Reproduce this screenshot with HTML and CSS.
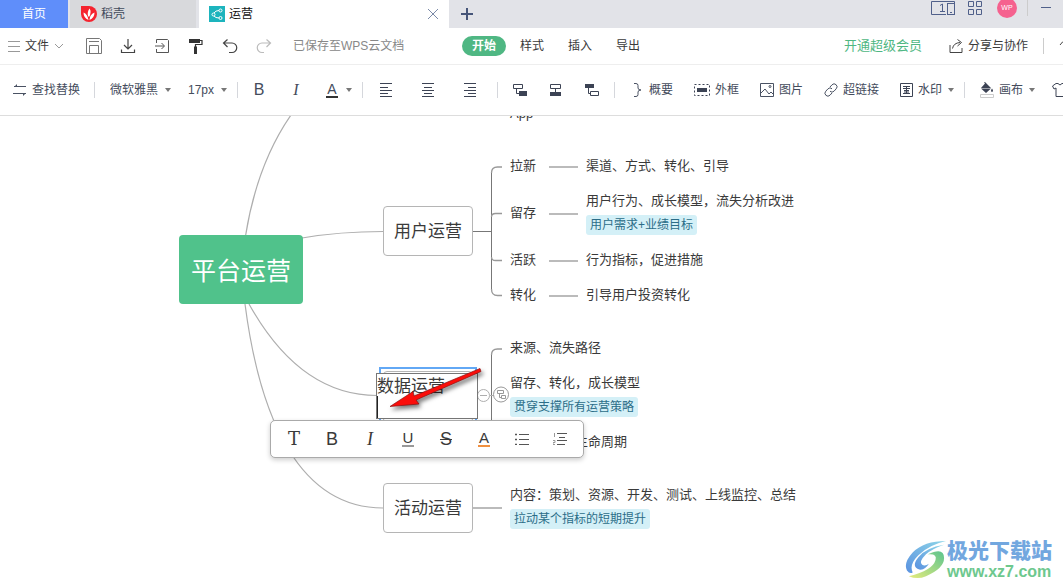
FILE: index.html
```html
<!DOCTYPE html>
<html lang="zh-CN">
<head>
<meta charset="utf-8">
<title>运营</title>
<link rel="stylesheet" href="styles.css">
</head>
<body>
<header class="tabs">
  <button class="tab tab-home">首页</button>
  <button class="tab tab-docer">
    <svg width="16" height="16" viewBox="0 0 16 16"><path d="M0 0h8a8 8 0 1 1-8 8z" fill="#f5242f"/><path d="M7.500 14Q2.500 12 2.500 6.500Q6.500 8 7.500 14M7 10Q6 6 8.500 2.500Q11 6 8 11M8.500 14Q8.500 8.500 13.500 6.500Q13.500 12 8.500 14" fill="#fff"/></svg>
    稻壳
  </button>
  <div class="tab tab-active">
    <svg width="16" height="16" viewBox="0 0 16 16"><rect width="16" height="16" fill="#1db4bd"/><g fill="none" stroke="#fff"><circle cx="4.500" cy="8.500" r="1.500"/><circle cx="11.500" cy="4.500" r="1.500"/><circle cx="11.500" cy="12" r="1.500"/><path d="M5 7Q6.500 4.500 10 4.500M5 10Q6.500 12 10 12"/></g></svg>
    <span>运营</span>
    <button class="close" aria-label="关闭"><svg width="12" height="12" viewBox="0 0 12 12"><path d="M1 1l10 10M11 1L1 11" stroke="#7b8aa8" fill="none"/></svg></button>
  </div>
  <button class="new-tab" aria-label="新建"><svg width="12" height="12" viewBox="0 0 12 12"><path d="M6 0v12M0 6h12" stroke="#465579" stroke-width="2"/></svg></button>
  <div class="window-tools">
    <button aria-label="设备"><svg width="24" height="16" viewBox="0 0 24 16" fill="none" stroke="#50608a"><path d="M15 14.500H.5V1.500h23v13M11.500 4v7M9 5.500l2.500-1.500M9 11.500h5" /><rect x="16.500" y="3.500" width="7" height="11"/><path d="M19 12.500h2"/></svg></button>
    <button aria-label="应用"><svg width="14" height="16" viewBox="0 0 14 16" fill="none" stroke="#50608a"><path d="M.5 1.500h5v5h-5zM8.500 1.500h5v5h-5zM.5 9.500h5v5h-5zM8.500 9.500h5v5h-5z"/></svg></button>
    <span class="avatar">WP</span>
    <span class="bar"></span>
    <button aria-label="最小化"><svg width="10" height="16" viewBox="0 0 10 16"><path d="M0 7.500h10" stroke="#50608a"/></svg></button>
  </div>
</header>

<nav class="menu">
  <button class="file"><svg width="12" height="12" viewBox="0 0 12 12" stroke="#999"><path d="M0 1.500h12M0 6.500h12M0 11.500h12"/></svg>文件<svg width="10" height="12" viewBox="0 0 10 12"><path d="M1 4l4 4 4-4" fill="none" stroke="#999"/></svg></button>
  <div class="quick">
    <button aria-label="保存"><svg width="16" height="16" viewBox="0 0 16 16" fill="none" stroke="#777"><path d="M.5.500h13l2 2v13H.5zM3.500 15V7.500h9V15M3 3.500h10"/></svg></button>
    <button aria-label="下载"><svg width="16" height="16" viewBox="0 0 16 16" fill="none" stroke="#444" stroke-width="1.200"><path d="M8 1v9.500M4 7l4 4 4-4M1.500 11.500v3h13v-3"/></svg></button>
    <button aria-label="导入"><svg width="16" height="16" viewBox="0 0 16 16" fill="none" stroke="#555"><path d="M2.500 5V1.500h11l1 1v12h-12V11M1 8h9M7.500 5L10.500 8l-3 3"/></svg></button>
    <button aria-label="格式刷"><svg width="16" height="16" viewBox="0 0 16 16"><path d="M1 1h11v4H1z" fill="#333"/><path d="M12 2.500h2v4H7.500V9" fill="none" stroke="#333" stroke-width="1.200"/><path d="M6 8.500h3V16H6z" fill="#333"/></svg></button>
    <button aria-label="撤销"><svg width="16" height="16" viewBox="0 0 16 16" fill="none" stroke="#444" stroke-width="1.200"><path d="M5.500 1.500L1.500 5l4 4M2 5h8a4.500 4.500 0 0 1 0 9.500H7"/></svg></button>
    <button aria-label="重做"><svg width="16" height="16" viewBox="0 0 16 16" fill="none" stroke="#bbb" stroke-width="1.200"><path d="M10.500 1.500l4 3.500-4 4M14 5H6a4.500 4.500 0 0 0 0 9.500h2"/></svg></button>
  </div>
  <span class="saved">已保存至WPS云文档</span>
  <div class="pages">
    <button class="page page-on">开始</button>
    <button class="page">样式</button>
    <button class="page">插入</button>
    <button class="page">导出</button>
  </div>
  <div class="menu-end">
    <a class="vip" href="#">开通超级会员</a>
    <button class="share"><svg width="14" height="14" viewBox="0 0 14 14" fill="none" stroke="#444"><path d="M1 6v7.500h12V9M3.500 9.500Q4.500 4 11 3.500M8.500.5l4 3-4 3.500"/></svg>分享与协作</button>
    <span class="bar"></span>
    <svg class="cut" width="14" height="14" viewBox="0 0 14 14"><path d="M1 6q2-4 6-4t6 4" fill="none" stroke="#444"/></svg>
  </div>
</nav>

<div class="ribbon">
  <button class="cmd"><svg width="14" height="14" viewBox="0 0 14 14" fill="none" stroke="#4a5263"><path d="M1 3.500h12M0 10.500h13"/><path d="M1 4l3-3v3zM13 10l-3 3v-3z" fill="#4a5263" stroke="none"/></svg>查找替换</button>
  <div class="group fonts">
    <label class="pick"><select class="family" aria-label="字体"><option>微软雅黑</option></select><i class="caret"></i></label>
    <label class="pick"><select class="size" aria-label="字号"><option>17px</option></select><i class="caret"></i></label>
  </div>
  <div class="group letters">
    <button class="letter">B</button>
    <button class="letter slant">I</button>
    <button class="letter tint"><span>A</span><i class="caret"></i></button>
  </div>
  <div class="group aligns">
    <button aria-label="左对齐"><svg width="14" height="14" viewBox="0 0 14 14" stroke="#3c4354"><path d="M1 .5h12M1 4.500h8M1 7.500h12M1 10.500h8M1 13.500h12"/></svg></button>
    <button aria-label="居中"><svg width="14" height="14" viewBox="0 0 14 14" stroke="#3c4354"><path d="M1 .5h12M3 4.500h8M1 7.500h12M3 10.500h8M1 13.500h12"/></svg></button>
    <button aria-label="右对齐"><svg width="14" height="14" viewBox="0 0 14 14" stroke="#3c4354"><path d="M1 .5h12M5 4.500h8M1 7.500h12M5 10.500h8M1 13.500h12"/></svg></button>
  </div>
  <div class="group topics">
    <button aria-label="子主题"><svg width="14" height="12" viewBox="0 0 14 12" fill="none" stroke="#3c4354"><path d="M.5.500h9v4h-9zM3.500 5v4.500H6"/><path d="M6 7h8v5H6z" fill="#3c4354" stroke="none"/></svg></button>
    <button aria-label="同级主题"><svg width="14" height="12" viewBox="0 0 14 12" fill="none" stroke="#3c4354"><path d="M1.500.500h10v4h-10zM6.500 5v3"/><path d="M1 8h11v4H1z" fill="#3c4354" stroke="none"/></svg></button>
    <button aria-label="父主题"><svg width="14" height="12" viewBox="0 0 14 12" fill="none" stroke="#3c4354"><path d="M5.500 7.500h8v4h-8zM3.500 4v5.500H6"/><path d="M0 0h9v4H0z" fill="#3c4354" stroke="none"/></svg></button>
  </div>
  <div class="group inserts">
    <button class="cmd"><svg width="11" height="14" viewBox="0 0 11 14" fill="none" stroke="#4a5263"><path d="M1 .5h2q2 0 2 2V5q0 2 3 2-3 0-3 2v2.500q0 2-2 2H1"/></svg>概要</button>
    <button class="cmd"><svg width="16" height="14" viewBox="0 0 16 14"><rect x=".5" y="1.500" width="15" height="11" fill="none" stroke="#3c4354" stroke-dasharray="2 2"/><path d="M3 5h10v4H3z" fill="#3c4354"/></svg>外框</button>
    <button class="cmd"><svg width="14" height="14" viewBox="0 0 14 14" fill="none" stroke="#4a5263"><path d="M.5.500h13v13H.5zM1 10l4-4 4 5 2-2 2 2"/><circle cx="10" cy="3.500" r="1"/></svg>图片</button>
    <button class="cmd"><svg width="14" height="14" viewBox="0 0 14 14" fill="none" stroke="#4a5263"><path d="M6 4l2-2.200a2.800 2.800 0 0 1 4.200 4L10 8.200a2.800 2.800 0 0 1-4 0M8 10l-2 2.200a2.800 2.800 0 0 1-4.200-4L4 5.800a2.800 2.800 0 0 1 4 0"/></svg>超链接</button>
    <button class="cmd"><svg width="13" height="14" viewBox="0 0 13 14" fill="none" stroke="#3c4354"><path d="M.5.500h12v13H.5zM3 3.500h7M3 5.500h7M3 10.500h7M4 7.500h5M6.500 3v7M4 9h5"/></svg>水印<i class="caret"></i></button>
  </div>
  <div class="group paint">
    <button class="cmd"><svg width="14" height="16" viewBox="0 0 14 16"><path d="M1 6.500h10L6 11zM1 6l4-4.500L4 .5l1-.5 6 6" fill="#3c4354"/><path d="M12 6.500q2 2.500 0 3.500-2-1 0-3.500" fill="#3c4354"/><path d="M.5 12.500h13v3H.5z" fill="#fff" stroke="#ccc"/></svg>画布<i class="caret"></i></button>
    <svg class="cut" width="16" height="14" viewBox="0 0 16 14" fill="none" stroke="#3c4354"><path d="M.5 3L4 .5h2q2 3 4 0h2L15.500 3l-1.500 3-2-1v8.500H4V5L2 6z"/></svg>
  </div>
</div>

<main class="canvas">
  <svg class="links" width="1063" height="471" viewBox="0 116 1063 471" fill="none" stroke="#aeaeae">
    <path d="M245.500 236Q257 164 291 115M302 238Q340 231.500 383 231.500M249 304Q300 395.500 377 395.500M245 304C260 420 300 508 383 508" stroke-width="1.200"/>
    <path d="M473 231.500h18.500M491.500 173V290M491.500 355v100" stroke="#777"/>
    <path d="M491.500 173q0-6 6-6h4.500M491.500 217q0-3.500 4-3.500h6.500M491.500 257q0 3.500 4 3.500h6.500M491.500 289q0 6.500 6 6.500h4.500M491.500 355q0-6 6-6h4.500" stroke="#999" stroke-width="1.300"/>
    <path d="M549 167h29M549 214h29M549 261h29M549 296h29M473 508h29" stroke="#bbb" stroke-width="2"/>
    <circle cx="483.500" cy="395.500" r="6" fill="#fff"/><path d="M480 395.500h7M490 395.500h4"/>
    <circle cx="501" cy="394.500" r="7.500" fill="#fff" stroke="#999"/><path d="M497.500 390.500h6v3h-6zM499.500 394v3.500h2M501.500 395.500h4v3h-4z" stroke="#999"/>
  </svg>
  <div class="node root">平台运营</div>
  <div class="node branch users">用户运营</div>
  <div class="node branch events">活动运营</div>
  <div class="selection"><div class="selected-node"></div></div>
  <textarea class="editor" aria-label="主题文字">数据运营</textarea>
  <i class="cursor"></i>

  <div class="leaf l-app">App</div>
  <div class="leaf l-new">拉新</div><div class="leaf l-new-info">渠道、方式、转化、引导</div>
  <div class="leaf l-keep">留存</div>
  <div class="leaf l-keep-info">用户行为、成长模型，流失分析改进<span class="tag">用户需求+业绩目标</span></div>
  <div class="leaf l-active">活跃</div><div class="leaf l-active-info">行为指标，促进措施</div>
  <div class="leaf l-turn">转化</div><div class="leaf l-turn-info">引导用户投资转化</div>
  <div class="leaf l-source">来源、流失路径</div>
  <div class="leaf l-model">留存、转化，成长模型<span class="tag">贯穿支撑所有运营策略</span></div>
  <div class="leaf l-life">生命周期</div>
  <div class="leaf l-content">内容：策划、资源、开发、测试、上线监控、总结<span class="tag">拉动某个指标的短期提升</span></div>

  <div class="format">
    <button class="slab">T</button>
    <button>B</button>
    <button class="slant">I</button>
    <button class="under"><span>U</span></button>
    <button class="strike">S</button>
    <button class="color"><span>A</span></button>
    <button aria-label="项目符号"><svg width="14" height="12" viewBox="0 0 14 12" stroke="#555"><path d="M4 1.500h10M4 6.500h10M4 11.500h10"/><path d="M0 1.500h2M0 6.500h2M0 11.500h2" stroke-width="1.500"/></svg></button>
    <button aria-label="编号"><svg width="14" height="12" viewBox="0 0 14 12" stroke="#555"><path d="M4 .5h10M6 4.500h6M4 7.500h10M4 11.500h8" fill="none"/><path d="M1.500 0v4M0 7.500h2v2H0v2h2" fill="none" stroke="#999"/></svg></button>
  </div>

  <svg class="arrow" width="110" height="56" viewBox="380 360 110 56"><path d="M390 406.500L413 391.500 414 396 480 368.500 481 371.500 416 400 419 404z" fill="#fb0d0a" stroke="#8a1010" stroke-width=".7"/></svg>

  <div class="brand">
    <svg width="42" height="40" viewBox="0 0 44 42">
      <defs>
        <linearGradient id="sky" x1="0" y1="1" x2="1" y2="0"><stop offset="0" stop-color="#5a92e0"/><stop offset="1" stop-color="#8fd6e8"/></linearGradient>
        <linearGradient id="leaf" x1="0" y1="1" x2="1" y2="0"><stop offset="0" stop-color="#e6ec7c"/><stop offset="1" stop-color="#5cc48f"/></linearGradient>
      </defs>
      <path d="M43 1Q20 1 8 13-2 24 2 32q3 4 6 2Q4 26 14 16 25 5 43 1" fill="url(#sky)"/>
      <path d="M41 5Q22 8 14 18q-8 10 1 13 6 1 10-6-4 3-7 1-4-3 4-11 7-6 19-10" fill="url(#sky)"/>
      <path d="M24 15q10-1 8 6Q29 32 4 38q9 4 18 0 19-8 19-19 0-12-17-4" fill="url(#leaf)"/>
    </svg>
    <div class="brand-text"><strong>极光下载站</strong><span>www.xz7.com</span></div>
  </div>
</main>
</body>
</html>
```

FILE: styles.css
```css
* { box-sizing: border-box; }
body {
  margin: 0;
  height: 100vh;
  display: flex;
  flex-direction: column;
  overflow: hidden;
  background: #fff;
  color: #3a3a3a;
  font: 12px/18px "Liberation Sans", "Noto Sans CJK SC", sans-serif;
}
button, select, textarea { font: inherit; color: inherit; border: 0; padding: 0; margin: 0; background: none; }
button { display: flex; align-items: center; justify-content: center; white-space: nowrap; flex: none; }
svg { flex: none; display: block; }
.bar { width: 1px; height: 16px; background: #ccc; flex: none; }

.tabs { display: flex; height: 28px; flex: none; background: #e2e3e8; }
.tab { display: flex; align-items: center; gap: 4px; flex: none; }
.tab-home { width: 68px; background: #5f8efa; color: #fff; }
.tab-docer { width: 126px; margin: 0 3px 0 2px; padding-left: 11px; justify-content: flex-start; background: #d8d9dc; color: #444c5c; }
.tab-active { width: 250px; padding: 0 10px; background: #fff; color: #111; }
.close { margin-left: auto; }
.new-tab { width: 36px; }
.window-tools { margin-left: auto; display: flex; align-items: center; gap: 13px; height: 15px; padding-right: 12px; }
.avatar { width: 20px; height: 20px; border-radius: 50%; background: #f5628f; color: #fff; font-size: 7px; line-height: 20px; text-align: center; margin: 0 -3px 0 2px; flex: none; }

.menu { display: flex; align-items: center; height: 37px; flex: none; padding-left: 8px; border-bottom: 1px solid #eee; white-space: nowrap; }
.file { gap: 5px; }
.quick { display: flex; gap: 18px; margin: 0 21px 0 22px; }
.saved { color: #888; width: 112px; }
.pages { display: flex; gap: 4px; margin-left: 57px; }
.page { width: 44px; height: 20px; border-radius: 10px; }
.page-on { background: #4fb783; color: #fff; font-weight: 700; }
.menu-end { margin-left: auto; display: flex; align-items: center; gap: 15px; }
.vip { color: #4fb783; font-size: 13px; text-decoration: none; margin-right: 12px; }
.share { gap: 5px; }
.cut { margin-right: -10px; }

.ribbon { display: flex; align-items: center; height: 51px; flex: none; padding-left: 13px; border-bottom: 1px solid #ddd; color: #444c5c; overflow: hidden; }
.cmd { gap: 5px; }
.group { display: flex; align-items: center; height: 16px; border-left: 1px solid #d5d7dc; flex: none; }
.fonts { margin-left: 14px; padding: 0 10px 0 15px; gap: 17px; }
.pick { display: flex; align-items: center; gap: 6px; }
.pick select { appearance: none; height: 18px; }
.family { width: 49px; }
.size { width: 27px; }
.caret { border: 3px solid transparent; border-top: 4px solid #777; border-bottom: 0; flex: none; }
.cmd .caret { margin-left: 1px; }
.letters { padding: 0 10px 0 9px; gap: 13px; }
.letter { width: 24px; height: 20px; font-size: 16px; }
.slant { font-family: "Liberation Serif", serif; font-style: italic; }
.tint { width: auto; gap: 8px; margin-left: 5px; }
.tint span { width: 12px; line-height: 14px; text-align: center; border-bottom: 2px solid #333; font-size: 14px; }
.aligns { padding: 0 20px 0 16px; gap: 28px; }
.topics { padding: 0 15px; gap: 22px; }
.inserts { padding: 0 10px 0 18px; gap: 21px; }
.paint { padding-left: 15px; gap: 17px; }

.canvas { position: relative; flex: 1; overflow: hidden; }
.links { position: absolute; left: 0; top: 0; }
.node { position: absolute; display: flex; align-items: center; justify-content: center; padding-top: 2px; border-radius: 4px; white-space: nowrap; }
.root { left: 179px; top: 119px; width: 124px; height: 69px; background: #50c28b; color: #fff; font-size: 25px; }
.branch { left: 383px; width: 90px; height: 50px; background: #fff; border: 1px solid #b5b5b5; font-size: 17px; }
.users { top: 90px; }
.events { top: 367px; }
.selection { position: absolute; left: 379px; top: 251px; width: 98px; height: 60px; padding: 2px; border: 2px solid #62a8f5; background: #fff; }
.selected-node { height: 100%; border: 1px solid #b5b5b5; border-radius: 4px; }
.editor { position: absolute; left: 376px; top: 257px; width: 102px; height: 46px; border: 1px solid #777; background: #fff; font-size: 17px; line-height: 26px; resize: none; overflow: hidden; }
.cursor { position: absolute; left: 377px; top: 280px; width: 1px; height: 22px; background: #222; }

.leaf { position: absolute; left: 510px; font-size: 13px; line-height: 20px; white-space: nowrap; }
.tag { display: block; width: max-content; margin-top: 4px; padding: 0 4px; border-radius: 3px; background: #d4f0f7; color: #2b6d88; font-size: 12px; }
.l-app { top: -12px; }
.l-new, .l-new-info { top: 40px; }
.l-keep { top: 87px; }
.l-keep-info { top: 75px; }
.l-active, .l-active-info { top: 134px; }
.l-turn, .l-turn-info { top: 169px; }
.l-new-info, .l-keep-info, .l-active-info, .l-turn-info { left: 586px; }
.l-source { top: 222px; }
.l-model { top: 257px; }
.l-life { left: 575px; top: 316px; }
.l-content { top: 369px; }

.format { position: absolute; left: 270px; top: 304px; width: 314px; height: 38px; display: flex; align-items: center; padding: 0 4px; border: 1px solid #aaa; border-radius: 5px; background: #fff; box-shadow: 0 2px 5px #0003; font-size: 18px; }
.format button { width: 38px; height: 24px; }
.format .slab { font-family: "DejaVu Serif", serif; }
.under span { width: 12px; line-height: 14px; border-bottom: 2px solid #999; font-size: 15px; }
.strike { text-decoration: line-through; }
.color span { width: 12px; line-height: 14px; border-bottom: 2px solid #f09040; font-size: 15px; }
.arrow { position: absolute; left: 380px; top: 244px; filter: drop-shadow(2px 3px 2px #0008); }

.brand { position: absolute; right: 11px; bottom: 6px; display: flex; align-items: center; }
.brand-text { display: flex; flex-direction: column; font-weight: 700; }
.brand-text strong { color: #72a7df; font-size: 21px; line-height: 24px; }
.brand-text span { color: #6dc88e; font-size: 16px; line-height: 18px; }
```
